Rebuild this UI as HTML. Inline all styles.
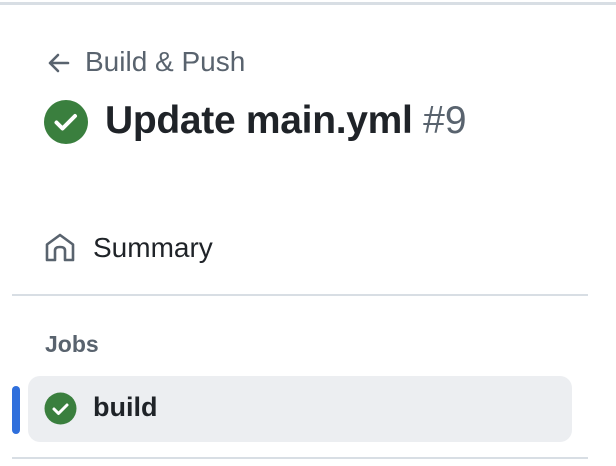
<!DOCTYPE html>
<html><head><style>
body{margin:0;width:616px;height:466px;background:#fff;font-family:"Liberation Sans",sans-serif;position:relative;overflow:hidden}
.a{position:absolute;white-space:nowrap}
</style></head><body>
<div class="a" style="left:0;top:2px;width:616px;height:3px;background:#d8dee4"></div>
<svg class="a" style="left:46px;top:50px" width="26" height="26" viewBox="0 0 26 26"><path d="M22 13H4M12 5L4 13L12 21" fill="none" stroke="#59636e" stroke-width="2.6" stroke-linecap="round" stroke-linejoin="round"/></svg>
<div class="a" style="left:85px;top:46px;font-size:28px;color:#59636e">Build &amp; Push</div>
<svg class="a" style="left:44px;top:100px" width="44" height="44" viewBox="0 0 44 44"><circle cx="22" cy="22" r="22" fill="#3a7f3e"/><path d="M12.5 22.5L18.5 28.5L31 16" fill="none" stroke="#fff" stroke-width="4" stroke-linecap="round" stroke-linejoin="round"/></svg>
<div class="a" style="left:105px;top:99px;font-size:39px;font-weight:bold;color:#1f2328;letter-spacing:-0.3px">Update main.yml <span style="font-weight:normal;color:#59636e;letter-spacing:0">#9</span></div>
<svg class="a" style="left:44px;top:232px" width="32" height="32" viewBox="0 0 32 32"><path d="M3 28V12.5L16 3L29 12.5V28H21V18.5Q21 15 16 15Q11 15 11 18.5V28Z" fill="none" stroke="#59636e" stroke-width="2.6" stroke-linejoin="round"/></svg>
<div class="a" style="left:93px;top:232px;font-size:28px;color:#1f2328">Summary</div>
<div class="a" style="left:12px;top:294px;width:576px;height:2px;background:#d8dee4"></div>
<div class="a" style="left:45px;top:331px;font-size:23px;font-weight:bold;color:#59636e">Jobs</div>
<div class="a" style="left:28px;top:376px;width:544px;height:66px;background:#eceef1;border-radius:12px"></div>
<div class="a" style="left:12px;top:386px;width:8px;height:48px;background:#2f6fdc;border-radius:4px"></div>
<svg class="a" style="left:44px;top:392px" width="33" height="33" viewBox="0 0 33 33"><circle cx="16.5" cy="16.5" r="16" fill="#3a7f3e"/><path d="M10 17L14.5 21.5L23 13" fill="none" stroke="#fff" stroke-width="3" stroke-linecap="round" stroke-linejoin="round"/></svg>
<div class="a" style="left:93px;top:392px;font-size:27px;font-weight:bold;color:#1f2328">build</div>
<div class="a" style="left:12px;top:457px;width:576px;height:2px;background:#d8dee4"></div>
</body></html>
